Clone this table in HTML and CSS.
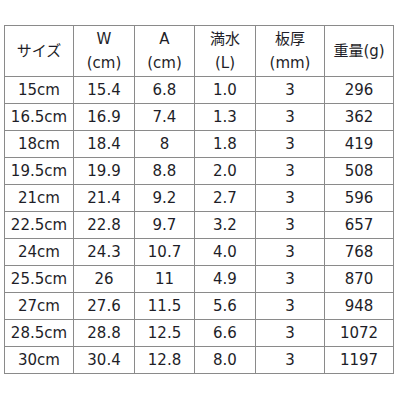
FILE: index.html
```html
<!DOCTYPE html>
<html lang="ja">
<head>
<meta charset="utf-8">
<link rel="stylesheet" href="styles.css">
</head>
<body>
<table class="spec">
  <colgroup>
    <col class="c1"><col class="c2"><col class="c3"><col class="c4"><col class="c5"><col class="c6">
  </colgroup>
  <thead>
    <tr><th>サイズ</th><th>W<br>(cm)</th><th>A<br>(cm)</th><th>満水<br>(L)</th><th>板厚<br>(mm)</th><th>重量(g)</th></tr>
  </thead>
  <tbody>
    <tr><td>15cm</td><td>15.4</td><td>6.8</td><td>1.0</td><td>3</td><td>296</td></tr>
    <tr><td>16.5cm</td><td>16.9</td><td>7.4</td><td>1.3</td><td>3</td><td>362</td></tr>
    <tr><td>18cm</td><td>18.4</td><td>8</td><td>1.8</td><td>3</td><td>419</td></tr>
    <tr><td>19.5cm</td><td>19.9</td><td>8.8</td><td>2.0</td><td>3</td><td>508</td></tr>
    <tr><td>21cm</td><td>21.4</td><td>9.2</td><td>2.7</td><td>3</td><td>596</td></tr>
    <tr><td>22.5cm</td><td>22.8</td><td>9.7</td><td>3.2</td><td>3</td><td>657</td></tr>
    <tr><td>24cm</td><td>24.3</td><td>10.7</td><td>4.0</td><td>3</td><td>768</td></tr>
    <tr><td>25.5cm</td><td>26</td><td>11</td><td>4.9</td><td>3</td><td>870</td></tr>
    <tr><td>27cm</td><td>27.6</td><td>11.5</td><td>5.6</td><td>3</td><td>948</td></tr>
    <tr><td>28.5cm</td><td>28.8</td><td>12.5</td><td>6.6</td><td>3</td><td>1072</td></tr>
    <tr><td>30cm</td><td>30.4</td><td>12.8</td><td>8.0</td><td>3</td><td>1197</td></tr>
  </tbody>
</table>
</body>
</html>
```
FILE: styles.css
```css
html, body {
  margin: 0;
  padding: 0;
  background: #fff;
}
body {
  padding: 25px 0 0 4px;
  font-family: "DejaVu Sans", "Noto Sans CJK JP", sans-serif;
  font-size: 15px;
  color: #1e1e28;
}
.spec {
  border-collapse: collapse;
  table-layout: fixed;
  width: 390px;
}
.c1 { width: 69px; }
.c2 { width: 61px; }
.c3 { width: 60px; }
.c4 { width: 61px; }
.c5 { width: 69px; }
.c6 { width: 69px; }
.spec th, .spec td {
  border: 1px solid #8a8a8a;
  text-align: center;
  vertical-align: middle;
  padding: 0;
  font-weight: normal;
  white-space: nowrap;
}
.spec th {
  height: 50px;
  line-height: 24px;
}
.spec td {
  height: 26px;
  line-height: 26px;
}
```
